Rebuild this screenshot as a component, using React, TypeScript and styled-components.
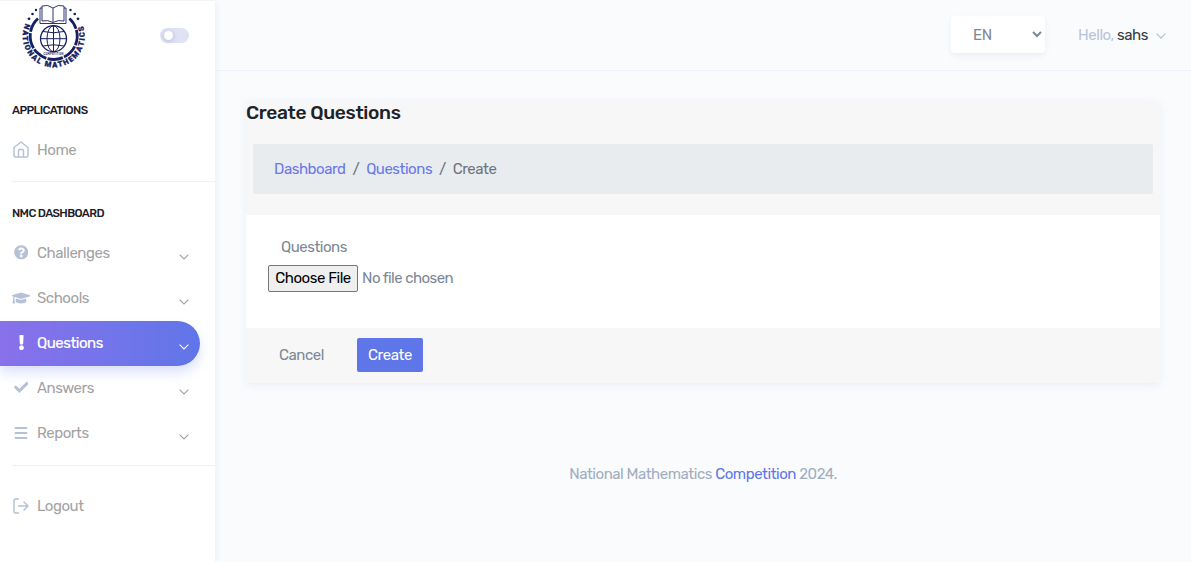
import React from "react";
import styled, { createGlobalStyle, css } from "styled-components";
import { FaQuestionCircle, FaGraduationCap, FaExclamation, FaCheck } from "react-icons/fa";

const GlobalStyle = createGlobalStyle`
  *, *::before, *::after { box-sizing: border-box; }
  body {
    margin: 0;
    background: #fafbfd;
    color: #7c8798;
    font-family: Rubik, Roboto, "Liberation Sans", sans-serif;
    font-size: 15px;
    font-weight: 400;
    line-height: 24px;
    letter-spacing: -0.46px;
    overflow: hidden;
  }
  a { color: inherit; text-decoration: none; }
`;

const Shell = styled.div`
  display: grid;
  grid-template-columns: 215px 1fr;
  height: 562px;
`;

const Sidebar = styled.aside`
  display: flex;
  flex-direction: column;
  background: #fff;
  border-top: 1px solid #f3f4f7;
  box-shadow: 1px 0 6px rgba(120, 150, 190, 0.12);
`;

const Brand = styled.div`
  display: flex;
  align-items: flex-start;
  height: 69px;
  padding: 2px 0 0 20px;
`;

const Switch = styled.div`
  display: flex;
  align-items: center;
  width: 29px;
  height: 15px;
  margin: 25px 0 0 72px;
  padding-left: 4px;
  border-radius: 8px;
  background: #dfe2f3;
`;

const Knob = styled.span`
  width: 9px;
  height: 9px;
  border-radius: 50%;
  background: #fff;
  box-shadow: 0 1px 5px rgba(80, 90, 160, 0.3);
`;

const Caption = styled.h6`
  margin: 0 0 0 12px;
  height: 24px;
  font-size: 11.6px;
  font-weight: 500;
  color: #1c2026;
  letter-spacing: -0.6px;
`;

const Section = styled.div<{ $top: number }>`
  display: flex;
  flex-direction: column;
  gap: 6px;
  padding-top: ${(p) => p.$top}px;
`;

const Rule = styled.hr<{ $top: number }>`
  flex: none;
  width: 203px;
  height: 1px;
  margin: ${(p) => p.$top}px 0 0 12px;
  border: 0;
  background: #f0f1f4;
`;

const Item = styled.a<{ $active?: boolean }>`
  display: flex;
  align-items: center;
  width: 200px;
  height: 45px;
  padding: 0 11px 0 12px;
  color: #a3a3a3;
  ${(p) =>
    p.$active &&
    css`
      color: #fff;
      -webkit-text-stroke: 0.2px #fff;
      border-radius: 0 23px 23px 0;
      background: linear-gradient(to right, #8971ea, #7f72ea, #7574ea, #6a75e9, #5f76e8);
      box-shadow: 0 7px 12px rgba(95, 118, 232, 0.21);
    `}
`;

const ItemLabel = styled.span`
  padding-bottom: 1px;
`;

const IconSlot = styled.span<{ $active?: boolean }>`
  display: flex;
  align-items: center;
  justify-content: center;
  width: 18px;
  margin-right: 7px;
  height: 24px;
  padding-bottom: 2px;
  color: ${(p) => (p.$active ? "#fff" : "#b5c1d6")};
  svg { flex: none; }
`;

const Caret = styled.svg`
  flex: none;
  width: 10px;
  height: 6px;
  margin: 6px 0 0 auto;
  fill: none;
  stroke: currentColor;
  stroke-width: 1.1;
`;

const Main = styled.main`
  display: flex;
  flex-direction: column;
`;

const TopBar = styled.header`
  display: flex;
  align-items: center;
  justify-content: flex-end;
  height: 71px;
  padding-right: 25px;
  border-bottom: 1px solid #edf1f9;
`;

const Language = styled.select`
  width: 94px;
  height: 37px;
  margin-right: 33px;
  margin-bottom: 1px;
  padding: 0 0 0 18px;
  border: 0;
  border-radius: 4px;
  background: #fff;
  box-shadow: 0 3px 6px rgba(140, 160, 200, 0.12);
  color: #7c8798;
  font: inherit;
  letter-spacing: -0.3px;
`;

const User = styled.div`
  display: flex;
  align-items: center;
  width: 88px;
  padding-bottom: 1px;
  color: #b8c3d9;
  b { font-weight: 400; color: #343a40; }
  ${Caret} { margin-top: 3px; stroke-width: 1.3; }
`;

const Card = styled.section`
  display: flex;
  flex-direction: column;
  margin: 30px 31px 0;
  height: 282px;
  border-radius: 3px;
  background: #fff;
  box-shadow: 0 2px 8px rgba(150, 180, 215, 0.17);
`;

const CardHead = styled.div`
  height: 114px;
  padding: 0 7px;
  border-radius: 3px 3px 0 0;
  background: #f7f7f7;
`;

const Title = styled.h4`
  margin: 0 0 0 -7px;
  height: 43px;
  font-size: 19.2px;
  font-weight: 500;
  line-height: 24px;
  letter-spacing: -0.34px;
  color: #1c2429;
`;

const Crumbs = styled.nav`
  display: flex;
  align-items: center;
  height: 50px;
  padding: 0 21px;
  border-radius: 2px;
  background: #e8ecef;
  color: #6c757d;
  a { color: #6a78ea; }
`;

const Slash = styled.span`
  width: 20.6px;
  text-align: center;
`;

const CardBody = styled.div`
  display: flex;
  flex-direction: column;
  height: 113px;
  padding: 20px 22px 0;
`;

const Label = styled.label`
  margin-left: 13px;
  height: 30px;
`;

const FileInput = styled.input`
  height: 27px;
  font: inherit;
  color: #7c8798;
  letter-spacing: -0.54px;
  &::file-selector-button {
    width: 90px;
    height: 27px;
    padding: 0 0 1px;
    margin: 0 4px 0 0;
    border: 1px solid #767676;
    border-radius: 2px;
    background: #efefef;
    color: #000;
    font: inherit;
    letter-spacing: -0.45px;
  }
`;

const CardFoot = styled.div`
  display: flex;
  align-items: center;
  height: 55px;
  padding: 0 0 1px 33px;
  border-radius: 0 0 3px 3px;
  background: #f7f7f7;
`;

const Cancel = styled.a`
  width: 78px;
`;

const Submit = styled.button`
  width: 66px;
  height: 34px;
  padding: 0;
  border: 0;
  border-radius: 2px;
  background: #5f76e8;
  color: #fff;
  font: inherit;
  letter-spacing: -0.4px;
`;

const Footer = styled.footer`
  margin-top: 79px;
  text-align: center;
  color: #a1aec2;
  a { color: #5f76e8; }
`;

const Logo = () => (
  <svg width="68" height="68" viewBox="20 3 68 68" fill="none" stroke="#16205f">
    <defs>
      <path id="rim" d="M25.5 23.500 A31 31 0 1 0 81.900 23.500" />
    </defs>
    <text fontSize="7.6" fontWeight="900" fill="#16205f" strokeWidth=".3" fontFamily="Roboto, sans-serif" letterSpacing="0">
      <textPath href="#rim" textLength="121" lengthAdjust="spacing">NATIONAL MATHEMATICS</textPath>
    </text>
    <path strokeWidth="2.8" strokeDasharray="15.500 1.200" d="M38 18.500 A23.500 23.500 0 1 0 69.400 18.500" />
    <circle cx="53.500" cy="38.700" r="13" strokeWidth="1.3" />
    <ellipse cx="53.500" cy="38.700" rx="6.500" ry="13" strokeWidth="1" />
    <path strokeWidth="1" d="M53.500 26V52M40.500 38.700H66.500M43 31.500Q53.500 34 64 31.500M43 46Q53.500 43.500 64 46" />
    <text x="53.500" y="54.600" textAnchor="middle" fontSize="2.7" fontWeight="500" fill="#16205f" stroke="none" letterSpacing="0.200">COMPETITION</text>
    <path strokeWidth=".9" fill="#fff" d="M53 8Q48 4 42 6V21Q48 19.500 53 22.500Q58 19.500 64 21V6Q58 4 53 8ZV22M42 8H40V23.500H66V8H64" />
    <g fill="#16205f" stroke="none">
      <circle cx="36" cy="10" r="1.2" /><circle cx="32.500" cy="14" r="1.3" /><circle cx="29" cy="18.800" r="1.400" />
      <circle cx="70.500" cy="10" r="1.200" /><circle cx="74.700" cy="14" r="1.300" /><circle cx="78" cy="18.800" r="1.400" />
    </g>
  </svg>
);

const HomeIcon = () => (
  <svg width="16" height="17" viewBox="0 0 16 17" fill="none" stroke="currentColor" strokeWidth="1.45" strokeLinejoin="round">
    <path d="M1 6.500L8 1L15 6.500V14.500Q15 16 13.500 16H2.500Q1 16 1 14.500ZM5.500 16V9.500Q5.500 8.500 6.500 8.500H9.500Q10.500 8.500 10.500 9.500V16" />
  </svg>
);

const LinesIcon = () => (
  <svg width="14" height="12" viewBox="0 0 14 12" stroke="currentColor" strokeWidth="1.9" strokeLinecap="round">
    <path d="M1.500 1H12.500M1.500 6H12.500M1.500 11H12.500" />
  </svg>
);

const LogoutIcon = () => (
  <svg width="16" height="16" viewBox="0 0 16 16" fill="none" stroke="currentColor" strokeWidth="1.450" strokeLinecap="round" strokeLinejoin="round">
    <path d="M5.500 1H2.500Q1 1 1 2.500V13.500Q1 15 2.500 15H5.500M5.500 8H14.800M11 4L15 8L11 12" />
  </svg>
);

const Chevron = () => (
  <Caret viewBox="0 0 10 6"><path d="M.6 .6L5 5L9.400 .6" /></Caret>
);

type Entry = { label: string; icon: React.ReactNode; active?: boolean };

const entries: Entry[] = [
  { label: "Challenges", icon: <FaQuestionCircle size={14.5} /> },
  { label: "Schools", icon: <FaGraduationCap size={18} /> },
  { label: "Questions", icon: <FaExclamation size={15} />, active: true },
  { label: "Answers", icon: <FaCheck size={14.5} /> },
  { label: "Reports", icon: <LinesIcon /> },
];

export default function App() {
  return (
    <>
      <GlobalStyle />
      <Shell>
        <Sidebar>
          <Brand>
            <Logo />
            <Switch><Knob /></Switch>
          </Brand>
          <Section $top={28}>
            <Caption>APPLICATIONS</Caption>
            <Item href="#"><IconSlot><HomeIcon /></IconSlot><ItemLabel>Home</ItemLabel></Item>
          </Section>
          <Rule $top={8} />
          <Section $top={19}>
            <Caption>NMC DASHBOARD</Caption>
            <div>
              {entries.map((e) => (
                <Item href="#" key={e.label} $active={e.active}>
                  <IconSlot $active={e.active}>{e.icon}</IconSlot>
                  <ItemLabel>{e.label}</ItemLabel>
                  <Chevron />
                </Item>
              ))}
            </div>
          </Section>
          <Rule $top={9} />
          <Section $top={18}>
            <Item href="#"><IconSlot><LogoutIcon /></IconSlot><ItemLabel>Logout</ItemLabel></Item>
          </Section>
        </Sidebar>
        <Main>
          <TopBar>
            <Language defaultValue="EN"><option>EN</option></Language>
            <User><span>Hello, <b>sahs</b></span><Chevron /></User>
          </TopBar>
          <Card>
            <CardHead>
              <Title>Create Questions</Title>
              <Crumbs>
                <a href="#">Dashboard</a>
                <Slash>/</Slash>
                <a href="#">Questions</a>
                <Slash>/</Slash>
                <span>Create</span>
              </Crumbs>
            </CardHead>
            <CardBody>
              <Label htmlFor="file">Questions</Label>
              <FileInput id="file" type="file" />
            </CardBody>
            <CardFoot>
              <Cancel href="#">Cancel</Cancel>
              <Submit>Create</Submit>
            </CardFoot>
          </Card>
          <Footer>
            National Mathematics <a href="#">Competition</a> 2024.
          </Footer>
        </Main>
      </Shell>
    </>
  );
}
